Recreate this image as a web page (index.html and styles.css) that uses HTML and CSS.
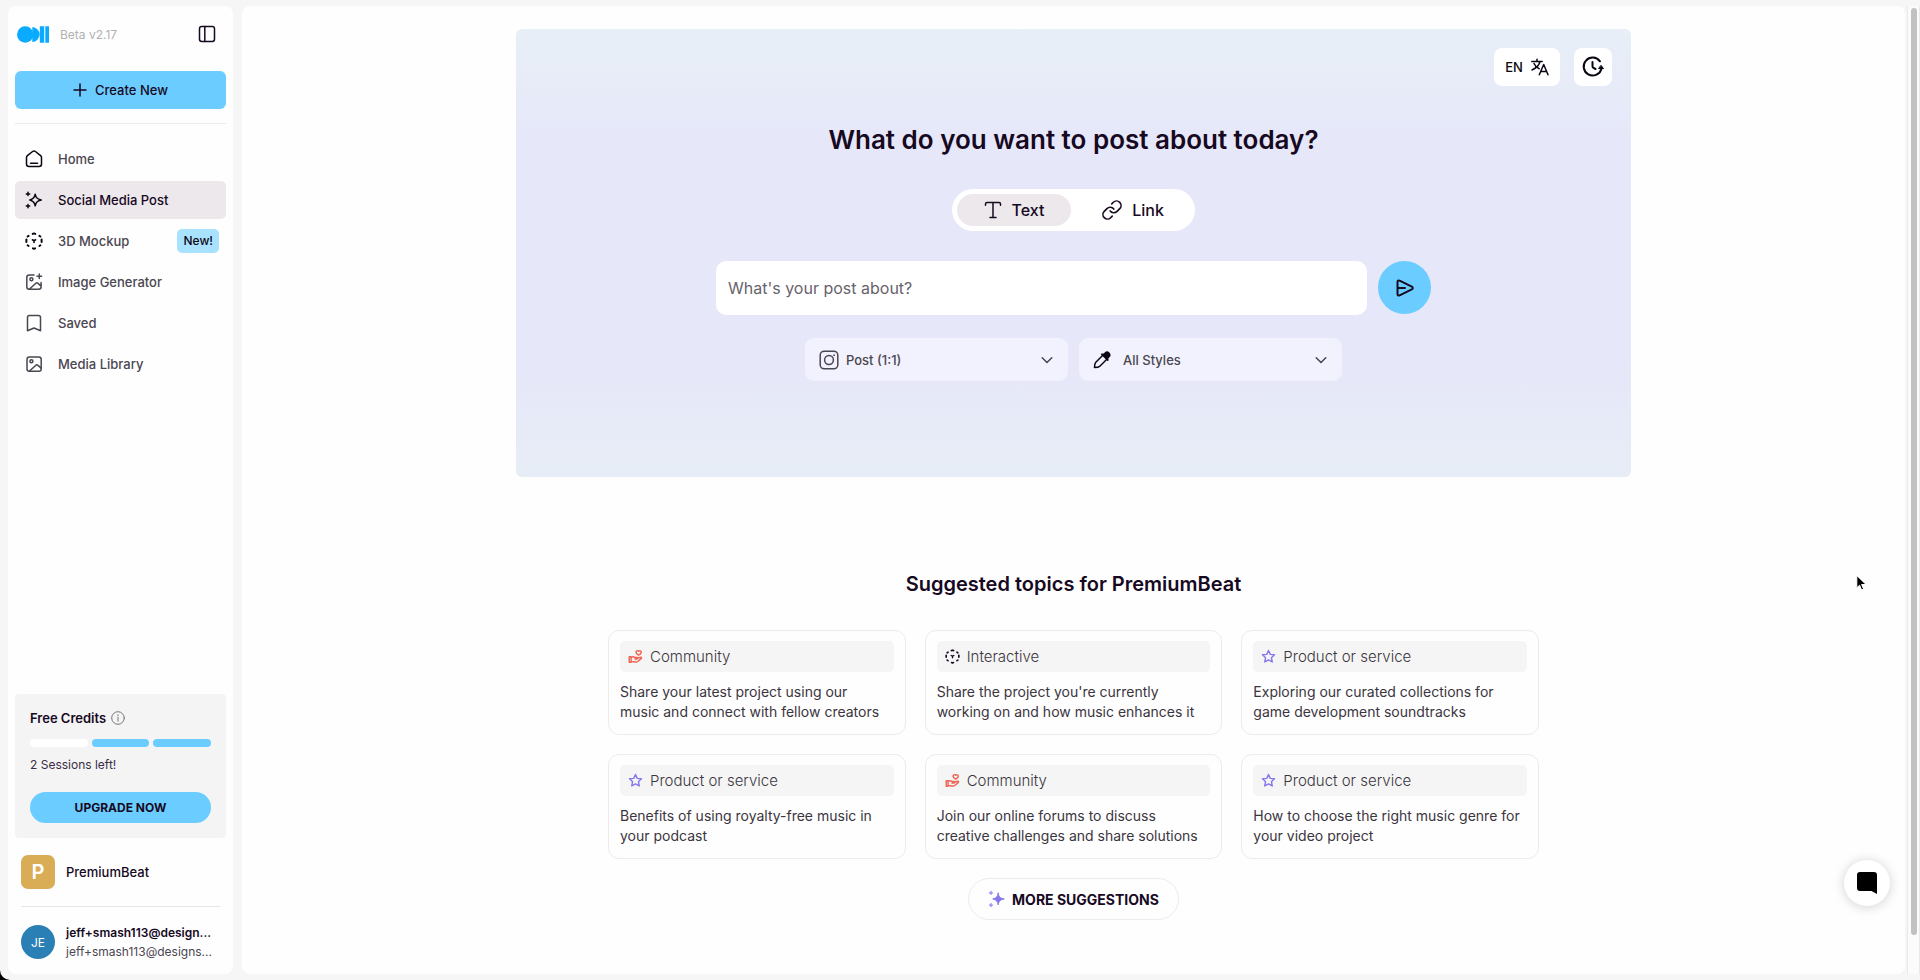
FILE: index.html
```html
<!DOCTYPE html>
<html lang="en">
<head>
<meta charset="utf-8">
<title>Social Media Post</title>
<link rel="stylesheet" href="styles.css">
</head>
<body>
<svg class="sprite" aria-hidden="true">
  <symbol id="i-sparkles" viewBox="0 0 18 18"><path d="M10.2 3.2c.6 3.6 1.800 4.900 6 5.800-4.200.9-5.400 2.200-6 5.800-.6-3.600-1.800-4.900-5.400-5.800 3.600-.9 4.800-2.200 5.400-5.800z"/><path d="M3 1.200v3.400M1.300 2.900h3.400M3 13.400v3.400M1.300 15.100h3.400"/></symbol>
  <symbol id="i-cube" viewBox="0 0 18 18"><path stroke-width="2" d="m7.700 1.900 1.300-.5 1.300.5M3.600 3.900l-1 .6M14.400 3.900l1 .6M1.400 7.500v2.400M16.600 7.500v2.400M2.600 13.300l1 .7M15.400 13.300l-1 .7M7.900 16.300l1.100.5 1.100-.5"/><path stroke-width="1.600" d="M7.400 7.800 9 8.700l1.600-.9M9 8.700v1.800"/></symbol>
  <symbol id="i-star" viewBox="0 0 16 16"><path d="M8 1.600 9.900 5.700l4.500.5-3.300 3.100.9 4.500L8 11.600l-4 2.200.9-4.500L1.600 6.200l4.500-.5z"/></symbol>
  <symbol id="i-hand" viewBox="0 0 16 16"><path d="M1.300 8.200h2v6h-2zM3.300 9c1.700-1 2.900-.9 4 0h2.300c1 0 1 1.600 0 1.600H7.400M10 10.100l3.100-1.300c1.300-.4 1.900.7.9 1.500l-3.600 3c-1 .7-2 .7-3 .5l-4.100-.6"/><path d="M11.200 6.500C9 5.200 8.200 4.100 8.700 2.700c.5-1.200 1.900-1.200 2.700-.4 1-.7 2.500-.4 2.700.8.200 1.400-1 2.600-2.900 3.400z"/></symbol>
  <symbol id="i-chevron" viewBox="0 0 14 14"><path d="m2.200 4.700 4.800 4.800 4.800-4.800"/></symbol>
</svg>

<div class="app">
  <aside class="sidebar">
    <header class="brand">
      <svg class="logo" viewBox="0 0 32 17" aria-label="Logo"><circle cx="8.200" cy="8.500" r="8.200"/><path d="M15.300.9a8 8 0 0 1 7.300 7.600 8 8 0 0 1-7.300 7.600zM22.800.3h4.400v16.400h-4.400zM28.300.3H32v16.400h-3.700z"/></svg>
      <span class="version">Beta v2.17</span>
      <button class="icon-button" aria-label="Collapse sidebar"><svg class="icon" viewBox="0 0 18 18"><rect x="1.500" y="1.500" width="15" height="15" rx="2.200"/><path d="M6.800 1.500v15"/></svg></button>
    </header>

    <button class="create"><svg class="icon-s" viewBox="0 0 14 14"><path d="M7 1v12M1 7h12"/></svg>Create New</button>

    <nav class="nav">
      <a href="#"><svg class="icon dark" viewBox="0 0 18 18"><path d="M1.500 7.500c0-.8.3-1.300.9-1.800L7.600 1.500c.9-.7 1.900-.7 2.800 0l5.200 4.200c.6.5.9 1 .9 1.800V14c0 1.500-1 2.500-2.500 2.500H4c-1.500 0-2.500-1-2.500-2.500zM5.500 13.200h7"/></svg>Home</a>
      <a href="#" class="active" aria-current="page"><svg class="icon dark"><use href="#i-sparkles"/></svg>Social Media Post</a>
      <a href="#"><svg class="icon dark"><use href="#i-cube"/></svg>3D Mockup<span class="badge">New!</span></a>
      <a href="#"><svg class="icon" viewBox="0 0 18 18"><path d="M9 2H4.200C2.700 2 1.800 2.900 1.800 4.400v9.300c0 1.500.9 2.500 2.400 2.500h9.400c1.500 0 2.500-1 2.500-2.500V9.500M4.500 16l6.400-5.800c.6-.5 1.200-.5 1.800 0l3.400 2.900M14.300 1v4.600M12 3.300h4.600"/><circle cx="6.400" cy="6.300" r="1.500"/></svg>Image Generator</a>
      <a href="#"><svg class="icon" viewBox="0 0 18 18"><path d="M2.500 16.700V3.500c0-1.200.7-2 2-2h9c1.300 0 2 .8 2 2v13.200L9 14z"/></svg>Saved</a>
      <a href="#"><svg class="icon" viewBox="0 0 18 18"><rect x="2" y="2" width="14.200" height="14.200" rx="2.300"/><path d="m4.500 16 6.400-5.800c.6-.5 1.200-.5 1.800 0l3.400 2.900"/><circle cx="6.400" cy="6.300" r="1.500"/></svg>Media Library</a>
    </nav>

    <section class="credits">
      <h2>Free Credits <svg class="info" viewBox="0 0 14 14"><circle cx="7" cy="7" r="6.300"/><path d="M7 6.200v4M7 3.800v.8"/></svg></h2>
      <div class="meter"><span></span><span class="full"></span><span class="full"></span></div>
      <p>2 Sessions left!</p>
      <button class="upgrade">UPGRADE NOW</button>
    </section>

    <a href="#" class="account workspace"><span class="avatar">P</span><span class="name">PremiumBeat</span></a>
    <a href="#" class="account user"><span class="avatar">JE</span><span class="identity"><strong>jeff+smash113@design...</strong><span>jeff+smash113@designs...</span></span></a>
  </aside>

  <main class="main">
    <section class="hero">
      <div class="tools">
        <button class="tool">EN <svg class="icon" viewBox="0 0 18 18"><path d="M.8 3.500h10.400M6 1.300v2.200M9 3.500C8.200 7.200 5.400 10 1 12M3 5.500c1.200 2.700 3 4.300 5.200 5.300M8.300 16.700 12.700 6.500 17 16.700M9.800 13.400h5.700"/></svg></button>
        <button class="tool square" aria-label="History"><svg class="icon-l" viewBox="0 0 22 22"><path d="M18 5.300A9 9 0 1 0 19.300 13.200M10.500 6V10c0 .9.300 1.500 1 1.900l2 1.100"/><path class="solid" stroke-width="1" d="m19.200 9.600 2.300 3h-4.600z"/></svg></button>
      </div>
      <h1>What do you want to post about today?</h1>
      <div class="mode">
        <button class="on" aria-pressed="true"><svg class="icon" viewBox="0 0 18 18"><path d="M1.500 4.200V3c0-1 .6-1.500 1.500-1.500h12c.9 0 1.500.5 1.500 1.500v1.200M9 1.500v15M6 16.500h6"/></svg>Text</button>
        <button aria-pressed="false"><svg class="icon-m" viewBox="1 1 22 22"><path stroke-width="1.800" d="M10 13a5 5 0 0 0 7.540.540l3-3a5 5 0 0 0-7.070-7.070l-1.720 1.710M14 11a5 5 0 0 0-7.540-.540l-3 3a5 5 0 0 0 7.070 7.070l1.710-1.710"/></svg>Link</button>
      </div>
      <form class="prompt">
        <input type="text" aria-label="Post topic" placeholder="What's your post about?">
        <button type="button" class="send" aria-label="Send"><svg class="icon" viewBox="0 0 18 18"><path d="M1.500 3c0-1.300.9-1.900 2.100-1.400l12.200 6c1.300.7 1.300 2.100 0 2.800l-12.200 6c-1.200.5-2.100-.1-2.100-1.400zM1.500 9h7.500"/></svg></button>
      </form>
      <div class="filters">
        <label class="filter"><svg class="icon-m" viewBox="0 0 20 20"><rect x="1.200" y="1.200" width="17.600" height="17.600" rx="4"/><circle cx="10" cy="10" r="4.400"/><path d="M14.800 5.200h.6"/></svg><select aria-label="Format"><option>Post (1:1)</option></select><svg class="icon-s"><use href="#i-chevron"/></svg></label>
        <label class="filter"><svg class="icon dark" viewBox="0 0 18 18"><path d="m9.800 4.200-7 7c-.9.900-1.300 2.600-1.300 5.300 2.700 0 4.400-.4 5.300-1.300l7-7"/><path class="solid" d="m8.700 3.200 2.300.1 1.500-1.500c2-2 5.800 1.700 3.700 3.700l-1.500 1.500.1 2.300z"/></svg><select class="wide" aria-label="Style"><option>All Styles</option></select><svg class="icon-s"><use href="#i-chevron"/></svg></label>
      </div>
    </section>

    <section class="topics">
      <h2>Suggested topics for PremiumBeat</h2>
      <div class="cards">
        <button class="card"><span class="tag"><svg class="community"><use href="#i-hand"/></svg>Community</span><span class="copy">Share your latest project using our<br>music and connect with fellow creators</span></button>
        <button class="card"><span class="tag"><svg class="interactive"><use href="#i-cube"/></svg>Interactive</span><span class="copy">Share the project you're currently<br>working on and how music enhances it</span></button>
        <button class="card"><span class="tag"><svg class="product"><use href="#i-star"/></svg>Product or service</span><span class="copy">Exploring our curated collections for<br>game development soundtracks</span></button>
        <button class="card"><span class="tag"><svg class="product"><use href="#i-star"/></svg>Product or service</span><span class="copy">Benefits of using royalty-free music in<br>your podcast</span></button>
        <button class="card"><span class="tag"><svg class="community"><use href="#i-hand"/></svg>Community</span><span class="copy">Join our online forums to discuss<br>creative challenges and share solutions</span></button>
        <button class="card"><span class="tag"><svg class="product"><use href="#i-star"/></svg>Product or service</span><span class="copy">How to choose the right music genre for<br>your video project</span></button>
      </div>
      <button class="more"><svg class="icon"><use href="#i-sparkles"/></svg>MORE SUGGESTIONS</button>
    </section>
  </main>

  <div class="scrollbar"><div class="thumb"></div></div>

  <button class="chat" aria-label="Open chat"><svg viewBox="0 0 20 22"><path d="M3 0h14a3 3 0 0 1 3 3v19l-5.500-3H3a3 3 0 0 1-3-3V3a3 3 0 0 1 3-3z"/></svg></button>
  <svg class="pointer" viewBox="0 0 11 16" aria-hidden="true"><path d="M.8.800v12l2.800-2.600 2 4.700 2-.9-2-4.500h4.200z"/></svg>
</div>
</body>
</html>
```
FILE: styles.css
```css
* { box-sizing: border-box; }
html { background: #000; }
body {
  margin: 0;
  font-family: Inter, "Liberation Sans", sans-serif;
  font-size: 13px;
  color: #17091f;
}
h1, h2, p { margin: 0; }
button, input, select { font: inherit; color: inherit; border: 0; padding: 0; }
button { cursor: pointer; background: none; }
a { color: inherit; text-decoration: none; }
svg { flex: none; fill: none; stroke: currentColor; stroke-width: 1.5; stroke-linecap: round; stroke-linejoin: round; }
.sprite { display: none; }
.solid { fill: currentColor; }
.icon { width: 18px; height: 18px; }
.icon-s { width: 14px; height: 14px; }
.icon-m { width: 20px; height: 20px; }
.icon-l { width: 22px; height: 22px; stroke-width: 2; }
.dark { color: #0c0612; }

.app {
  display: grid;
  grid-template-columns: 225px 1fr 15px;
  min-height: 100vh;
  padding: 6px 0 6px 8px;
  background: #f6f6f6;
  border-bottom-left-radius: 10px;
}

/* Sidebar */
.sidebar {
  display: flex;
  flex-direction: column;
  padding: 14px 7px 13px;
  background: #fefefe;
  border-radius: 8px;
}
.brand { display: flex; align-items: center; height: 28px; margin: 0 10px 23px 2px; }
.logo { width: 32px; height: 17px; fill: #0aaaff; stroke: none; }
.version { margin-left: 11px; font-size: 12px; color: #b1b1b3; }
.icon-button { display: flex; margin-left: auto; }
.create {
  display: flex;
  align-items: center;
  justify-content: center;
  gap: 8px;
  height: 38px;
  border-radius: 6px;
  background: #6bcdff;
  font-weight: 500;
}
.nav {
  display: flex;
  flex-direction: column;
  gap: 3px;
  margin-top: 14px;
  padding-top: 16px;
  border-top: 1px solid #ebebed;
  font-weight: 500;
  color: #4b4650;
}
.nav a { display: flex; align-items: center; gap: 15px; height: 38px; padding: 0 7px 0 10px; border-radius: 5px; }
.nav .active { background: #ece8eb; color: #17091f; }
.badge { margin-left: auto; padding: 0 6px; border-radius: 5px; background: #a9e2ff; color: #0c0612; font-size: 12px; line-height: 24px; }
.credits { margin-top: auto; padding: 15px; border-radius: 4px; background: #f4f4f4; }
.credits h2 { display: flex; align-items: center; gap: 5px; font-size: 13px; line-height: 18px; font-weight: 600; }
.info { width: 14px; height: 14px; stroke-width: 1; color: #77747b; }
.meter { display: grid; grid-template-columns: repeat(3, 1fr); gap: 4px; margin: 12px 0 10px; }
.meter span { height: 8px; border-radius: 4px; background: #fff; }
.meter .full { background: #6bcdff; }
.credits p { font-size: 12px; line-height: 16px; color: #3a2d44; }
.upgrade { width: 100%; height: 31px; margin-top: 19px; border-radius: 16px; background: #6bcdff; font-size: 12px; font-weight: 700; }
.account { display: flex; align-items: center; gap: 11px; margin: 0 6px; }
.workspace { padding: 17px 0; border-bottom: 1px solid #e6e6e9; font-weight: 500; }
.user { padding-top: 16px; }
.avatar { display: grid; place-items: center; flex: none; width: 34px; height: 34px; border-radius: 7px; background: #d9ac56; color: #fff; font-size: 20px; font-weight: 600; }
.user .avatar { border-radius: 50%; background: #2a80b5; font-size: 12px; font-weight: 400; }
.identity { display: flex; flex-direction: column; line-height: 19px; color: #4b4650; white-space: nowrap; }
.identity strong { color: #17091f; font-size: 12px; font-weight: 600; }
.identity span { font-size: 12px; }

/* Main column */
.main { margin-left: 9px; padding: 23px 0 40px; border-radius: 8px; background: #fefefe; }
.hero {
  display: flex;
  flex-direction: column;
  align-items: center;
  max-width: 1115px;
  margin: 0 auto;
  padding: 19px 19px 96px;
  border-radius: 6px;
  background: linear-gradient(#e8eff7, #e6e8f9 24%, #e6e7f9 74%, #e7edf6);
}
.tools { display: flex; gap: 14px; align-self: flex-end; }
.tool { display: flex; align-items: center; justify-content: center; gap: 8px; width: 66px; height: 38px; border-radius: 8px; background: #fff; font-weight: 500; color: #0c0612; }
.square { width: 38px; }
h1 { margin-top: 38px; font-size: 26px; line-height: 32px; font-weight: 600; }
.mode { display: grid; grid-template-columns: 114px 114px; gap: 5px; margin-top: 33px; padding: 5px; border-radius: 21px; background: #fff; font-size: 16px; font-weight: 500; }
.mode button { display: flex; align-items: center; justify-content: center; gap: 10px; height: 32px; border-radius: 16px; }
.mode .on { background: #ece8eb; }
.prompt { display: flex; gap: 11px; width: 100%; max-width: 715px; margin-top: 30px; }
.prompt input { flex: 1; min-width: 0; height: 54px; padding: 0 12px; border-radius: 10px; background: #fff; font-size: 16px; outline: 0; }
.prompt input::placeholder { color: #67636b; }
.send { display: grid; place-items: center; width: 53px; height: 53px; border-radius: 50%; background: #6bcdff; }
.send svg { stroke-width: 2; }
.filters { display: grid; grid-template-columns: 263px 263px; gap: 11px; margin-top: 23px; color: #4b4650; font-size: 13px; font-weight: 500; }
.filter { display: flex; align-items: center; gap: 7px; height: 43px; padding: 0 14px; border-radius: 9px; background: #f1f2fd; }
.filter select { flex: 1; appearance: none; background: none; outline: 0; }
.filter .wide { padding-left: 5px; }

/* Suggested topics */
.topics { display: flex; flex-direction: column; align-items: center; margin: 94px auto 0; max-width: 931px; }
.topics h2 { font-size: 20px; line-height: 26px; font-weight: 600; }
.cards { display: grid; grid-template-columns: repeat(3, 1fr); gap: 19px; width: 100%; margin-top: 33px; }
.card { display: flex; flex-direction: column; gap: 10px; padding: 10px 11px 12px; border: 1px solid #ececee; border-radius: 11px; text-align: left; font-size: 14px; line-height: 20px; color: #3b3540; }
.tag { display: flex; align-items: center; gap: 7px; height: 31px; padding: 0 8px; border-radius: 5px; background: #f5f5f5; font-size: 15px; font-weight: 300; }
.tag svg { width: 15px; height: 15px; stroke-width: 1.5; }
.community { color: #ee6352; }
.interactive { color: #17091f; }
.product { color: #8577ea; }
.more { display: flex; align-items: center; gap: 6px; height: 42px; margin-top: 19px; padding: 0 19px; border: 1px solid #ececee; border-radius: 21px; font-size: 14px; font-weight: 700; }
.more svg { color: #8577ea; fill: #8577ea; stroke-width: 1; }

/* Overlays and page scrollbar */
.scrollbar { margin-left: 2px; padding: 2px 2px 0 3px; border: 1px solid #e9e9e9; border-width: 0 1px; background: #fbfbfb; }
.thumb { height: 96%; border-radius: 4px; background: #c1c1c1; }
.chat { position: fixed; right: 30px; bottom: 74px; display: grid; place-items: center; width: 46px; height: 46px; border-radius: 50%; background: #fff; box-shadow: 0 1px 12px rgba(0, 0, 0, .18); }
.chat svg { width: 20px; height: 22px; fill: #000; stroke: none; }
.pointer { position: fixed; left: 1856px; top: 575px; width: 11px; height: 16px; fill: #000; stroke: #fff; stroke-width: 1; }
```
